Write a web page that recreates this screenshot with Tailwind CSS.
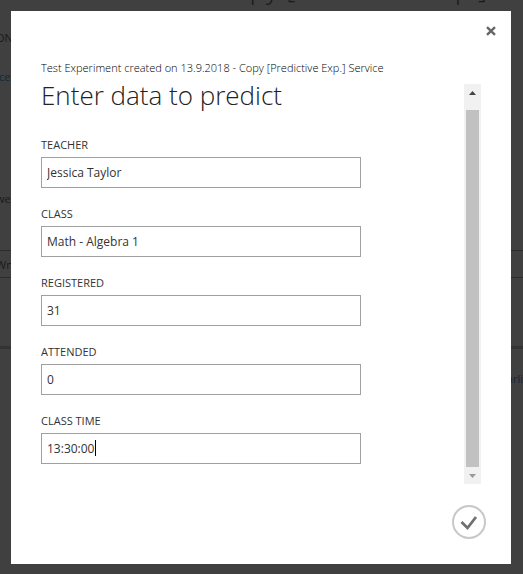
<!DOCTYPE html>
<html lang="en">
<head>
<meta charset="utf-8">
<meta name="viewport" content="width=device-width, initial-scale=1">
<title>Enter data to predict</title>
<script src="https://cdn.jsdelivr.net/npm/@tailwindcss/browser@4"></script>
</head>
<body class="relative min-h-screen overflow-hidden bg-[#404040] p-[11px] pr-3 pb-[10px] font-['Open_Sans','Noto_Sans',sans-serif] text-[#333]">

<!-- Dimmed page behind the dialog -->
<div class="absolute inset-0 text-[11px] leading-4 text-[#1a1a1a]" aria-hidden="true">
  <p class="absolute right-9 -top-[31px] text-[28px] leading-9 font-light whitespace-nowrap">Copy [Predictive Exp.]</p>
  <p class="absolute -left-1 top-[30px]">ON</p>
  <p class="absolute -left-px top-[69px] text-[#0f2a3a]">ce</p>
  <p class="absolute -left-1 top-[191px]">we</p>
  <div class="absolute -left-1 right-0 top-[250px] h-7 border-y border-[#2c2c2c] leading-7">Wn</div>
  <div class="absolute inset-x-0 top-[346px] h-[3px] bg-[#333]"></div>
  <p class="absolute right-0 top-[371px] text-[#14263a]">arli</p>
</div>

<main role="dialog" aria-labelledby="title" class="relative flex min-h-[553px] flex-col bg-white">
  <button type="button" aria-label="Close" class="absolute top-[15px] right-[15px]">
    <svg class="block size-[10px]" viewBox="0 0 10 10" fill="none" stroke="#666" stroke-width="2.400"><path d="M1 1.200 9 8.800M9 1.200 1 8.800"/></svg>
  </button>

  <div class="flex grow gap-5 pt-12 pr-[30px] pl-[30px]">
    <form class="grow">
      <p class="text-[11px] leading-[18px] font-light text-black">Test Experiment created on 13.9.2018 - Copy [Predictive Exp.] Service</p>
      <h1 id="title" class="mb-[25px] text-[26px] leading-9 font-light text-[#222]">Enter data to predict</h1>
      <div class="flex w-80 max-w-full flex-col gap-[19px]">
        <div><label for="teacher" class="mb-[5px] block text-[11px] leading-[14px]">TEACHER</label><input id="teacher" type="text" value="Jessica Taylor" class="block h-[31px] w-full border border-[#a0a0a0] px-[5px] text-[12px] outline-none"></div>
        <div><label for="class" class="mb-[5px] block text-[11px] leading-[14px]">CLASS</label><input id="class" type="text" value="Math - Algebra 1" class="block h-[31px] w-full border border-[#a0a0a0] px-[5px] text-[12px] outline-none"></div>
        <div><label for="registered" class="mb-[5px] block text-[11px] leading-[14px]">REGISTERED</label><input id="registered" type="text" value="31" class="block h-[31px] w-full border border-[#a0a0a0] px-[5px] text-[12px] outline-none"></div>
        <div><label for="attended" class="mb-[5px] block text-[11px] leading-[14px]">ATTENDED</label><input id="attended" type="text" value="0" class="block h-[31px] w-full border border-[#a0a0a0] px-[5px] text-[12px] outline-none"></div>
        <div class="relative"><label for="time" class="mb-[5px] block text-[11px] leading-[14px]">CLASS TIME</label><input id="time" type="text" value="13:30:00" class="block h-[31px] w-full border border-[#a0a0a0] px-[5px] text-[12px] outline-none"><span class="absolute bottom-2 left-[54px] h-4 w-px bg-black"></span></div>
      </div>
    </form>
    <div class="mt-[25px] flex h-[400px] w-[17px] shrink-0 flex-col items-center bg-[#f1f1f1]">
      <button type="button" aria-label="Scroll up" class="flex h-[26px] w-full items-start justify-center pt-[7px]"><svg class="h-1 w-[7px]" viewBox="0 0 7 4" fill="#444"><path d="M0 4 3.5 0 7 4z"/></svg></button>
      <div class="w-[13px] grow bg-[#c1c1c1]"></div>
      <button type="button" aria-label="Scroll down" class="flex h-[17px] w-full items-center justify-center"><svg class="h-1 w-[7px]" viewBox="0 0 7 4" fill="#999"><path d="M0 0h7L3.5 4z"/></svg></button>
    </div>
  </div>
  <footer class="flex justify-end pr-[25px] pb-[25px]">
    <button type="button" aria-label="Submit"><svg class="block size-[34px]" viewBox="0 0 34 34" fill="none"><circle cx="17" cy="17" r="16" stroke="#c8c8c8" stroke-width="2"/><path d="m9.500 17 6 6 8.500-11" stroke="#707070" stroke-width="2.800"/></svg></button>
  </footer>
</main>
</body>
</html>
